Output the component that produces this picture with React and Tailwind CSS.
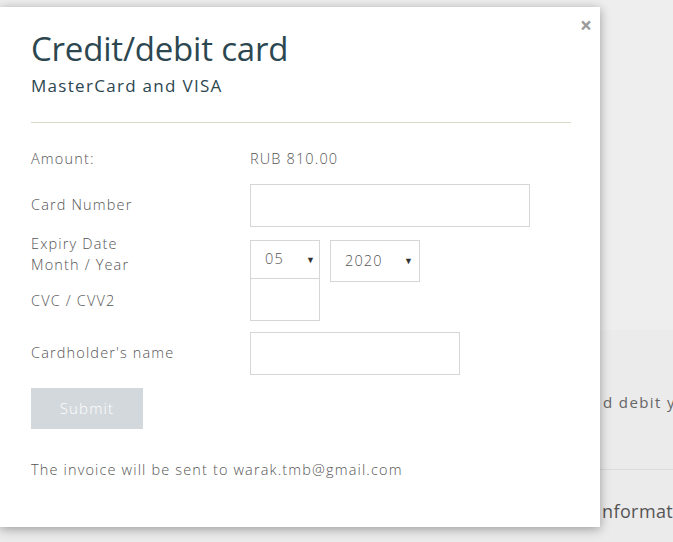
import React from 'react';

// Фон страницы под модальным окном оплаты
function Backdrop() {
  return (
    <div className="w-[673px] h-[542px] bg-[#ebebeb] overflow-hidden">
      <div className="h-[330px] bg-[#eeeeee] relative">
        <div className="absolute left-0 top-[195px] w-[2px] h-[65px] bg-[#2e5560]" />
      </div>
      <div className="h-[140px] border-b border-[#dcdcdc] flex items-center pl-[603px] pt-[6px]">
        <span className="text-[15px] text-[#666] whitespace-nowrap tracking-[1.4px]">d debit you</span>
      </div>
      <div className="flex pl-[602px] pt-[28px]">
        <span className="text-[18px] text-[#555] whitespace-nowrap tracking-[0.4px]">nformat<span className="text-[#e0902f]">i</span>on</span>
      </div>
    </div>
  );
}

function Field({ label, children }) {
  return (
    <div className="flex items-center">
      <div className="w-[219px] shrink-0">{label}</div>
      {children}
    </div>
  );
}

function Select({ value, className }) {
  return (
    <div className={`border border-[#d6d6d6] flex items-center justify-between ${className}`}>
      <span>{value}</span>
      <span className="text-[9px] text-[#333] tracking-normal">▼</span>
    </div>
  );
}

export default function App() {
  return (
    <div className="relative w-[673px] h-[542px]" style={{ fontFamily: '"Open Sans", "Noto Sans", sans-serif' }}>
      <Backdrop />

      {/* модальное окно */}
      <div className="absolute left-0 top-[7px] w-[600px] h-[520px] bg-white shadow-[0_2px_10px_rgba(0,0,0,0.35)] text-[#555] font-light">
        <button className="absolute right-[8px] top-[8px] text-[#9a9a9a] text-[21px] font-bold leading-none">×</button>

        <div className="px-[31px] pt-[22px]">
          <h1 className="text-[33px] leading-[40px] text-[#2c4750] font-normal tracking-[-0.2px]">Credit/debit card</h1>
          <div className="text-[17px] text-[#2c4750] mt-[6px] leading-[22px] font-normal tracking-[1.3px]">MasterCard and VISA</div>
          <div className="h-px bg-[#d9d7c7] mt-[25px] w-[540px]" />

          <div className="text-[14.5px] mt-[25px] tracking-[1.15px]">
            <Field label="Amount:">
              <span>RUB 810.00</span>
            </Field>

            <div className="mt-[14px]">
              <Field label="Card Number">
                <div className="w-[280px] h-[43px] border border-[#d6d6d6]" />
              </Field>
            </div>

            <div className="flex mt-[13px]">
              <div className="w-[219px] shrink-0 leading-[21px] mt-[-7px]">
                <div>Expiry Date</div>
                <div>Month / Year</div>
                <div className="mt-[15px]">CVC / CVV2</div>
              </div>
              <div className="flex gap-[10px] items-start">
                <div>
                  <Select value="05" className="w-[70px] h-[39px] pl-[14px] pr-[4px]" />
                  <div className="w-[70px] h-[42px] border border-[#d6d6d6] border-t-0" />
                </div>
                <Select value="2020" className="w-[90px] h-[42px] pl-[14px] pr-[6px]" />
              </div>
            </div>

            <div className="mt-[11px]">
              <Field label="Cardholder's name">
                <div className="w-[210px] h-[43px] border border-[#d6d6d6]" />
              </Field>
            </div>

            <button className="mt-[13px] w-[112px] h-[41px] bg-[#d3d8dc] text-white text-[15px]">Submit</button>

            <div className="mt-[30px]">The invoice will be sent to warak.tmb@gmail.com</div>
          </div>
        </div>
      </div>
    </div>
  );
}
